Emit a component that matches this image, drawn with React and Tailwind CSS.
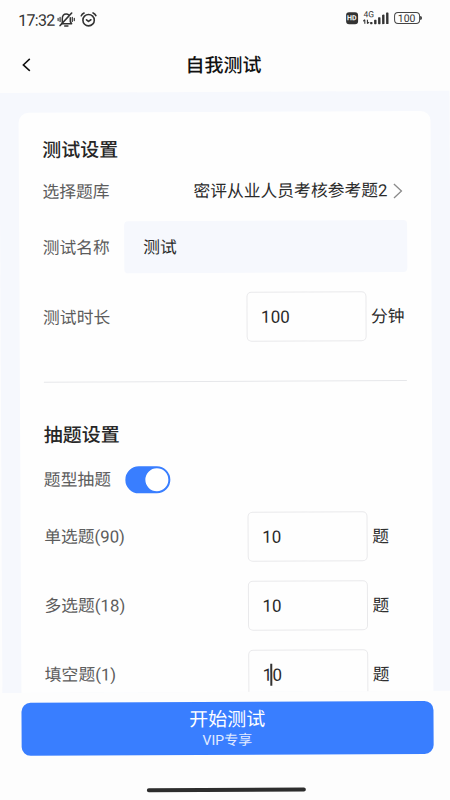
import { useState } from "react"

function StatusBar() {
  return (
    <div className="flex h-[40px] items-center pl-[19px] pr-[27px] text-[#333]">
      <span className="w-[36px] shrink-0 pt-[1px] text-[16px] tracking-[-0.7px]">17:32</span>
      <svg className="ml-[3px] shrink-0" width="18" height="16" viewBox="0 0 18 16" fill="none" stroke="currentColor" strokeWidth="1.5" strokeLinecap="round">
        <path d="M4.5 12h10M5.2 11.5V7.2C5.2 4.4 6.8 2.4 9.2 2.4c1 0 1.9.4 2.6 1M13.2 6v4l1.3 2M7.6 14.3h3.2" />
        <path d="M14.6 1.4L3 13.8" strokeWidth="1.7" />
        <path d="M1 6.7v2.2M3 5.6v4.2M15.2 5.6v4.2M17.2 6.7v2.2" strokeWidth="1.2" />
      </svg>
      <svg className="ml-[5px] shrink-0" width="17" height="16" viewBox="0 0 17 16" fill="none" stroke="currentColor" strokeWidth="1.6" strokeLinecap="round" strokeLinejoin="round">
        <circle cx="8.5" cy="8.6" r="5.7" />
        <path d="M6.4 8.2l2 1.7 2.4-1.7M1.2 4.1Q2 2.3 4 1.4M15.8 4.1Q15 2.3 13 1.4" />
      </svg>
      <div className="ml-auto flex items-center">
        <span className="flex h-[12px] w-[12.5px] items-center justify-center rounded-[3px] bg-[#333] pt-[1px] text-[7px] font-bold leading-none text-white">HD</span>
        <svg className="ml-[5px]" width="26" height="16" viewBox="0 0 26 16" fill="currentColor">
          <text x="0.5" y="7" fontSize="8.5" fontFamily="Roboto, sans-serif">4G</text>
          <path d="M1.7 9.5v4M4.3 9.5v4M0 11l1.7-1.5M4.3 13.5L6 12" stroke="currentColor" strokeWidth="1.1" fill="none" />
          <rect x="7" y="11.8" width="2.4" height="2.2" rx="0.6" />
          <rect x="11" y="9.5" width="2.4" height="4.5" rx="0.6" />
          <rect x="15" y="7" width="2.4" height="7" rx="0.6" />
          <rect x="19" y="4.5" width="2.4" height="9.5" rx="0.6" />
          <rect x="23" y="2.5" width="2.4" height="11.5" rx="0.6" />
        </svg>
        <span className="ml-[4.5px] flex h-[12.5px] w-[26px] items-center justify-center rounded-[4px] border-[1.5px] border-[#444] pt-[1.5px] text-[10.5px] leading-none">100</span>
        <span className="h-[4px] w-[2px] rounded-r-sm bg-[#444]" />
      </div>
    </div>
  )
}

function NumberField({ value, caret }) {
  return (
    <div className="relative flex h-[50px] w-[120px] shrink-0 items-center rounded-[5px] border border-[#e9e9eb] pl-[14px] pt-[2px] text-[17px] text-[#2b2b2b]">
      {value}
      {caret && <span className="absolute left-[21.5px] top-[13px] h-[22px] w-[1.5px] bg-[#333]" />}
    </div>
  )
}

function QuestionRow({ label, value, caret }) {
  return (
    <div className="flex h-[50px] items-center">
      <span className="w-[203px] pt-px text-[#5c5c5c]">{label}</span>
      <NumberField value={value} caret={caret} />
      <span className="ml-[5px] pt-[2px] text-[#2e2e2e]">题</span>
    </div>
  )
}

const questions = [
  { label: "单选题(90)", value: "10" },
  { label: "多选题(18)", value: "10" },
  { label: "填空题(1)", value: "10", caret: true },
]

export default function App() {
  const [typed, setTyped] = useState(true)

  return (
    <div className="h-[800px] w-[450px] overflow-hidden bg-[#fdfdfd] font-[Roboto,'Noto_Sans_CJK_SC',sans-serif]">
      <div className="-ml-[1px] flex h-[806px] w-[449.5px] origin-top-left rotate-[-0.28deg] flex-col">
        <StatusBar />
        <header className="grid h-[53px] shrink-0 grid-cols-[1fr_auto_1fr] items-center pb-[3px] pl-[22px] pr-[23px]">
          <svg width="10" height="14" viewBox="0 0 10 14" fill="none" stroke="#111" strokeWidth="1.5">
            <path d="M8.5 1L2 7l6.5 6" />
          </svg>
          <h1 className="pt-[2px] text-[19px] font-medium leading-none text-[#111]">自我测试</h1>
          <span />
        </header>

        <main className="h-[600px] shrink-0 overflow-hidden bg-[#f6f8fd] pl-[18.5px] pr-[18.5px] pt-[20px]">
          <section className="h-[620px] rounded-[10px] bg-[#fefefe] px-[24px] pt-[23px] text-[16.8px]">
            <h2 className="h-[30px] text-[19px] font-medium leading-[30px] text-[#262626]">测试设置</h2>

            <div className="mt-[12px] flex h-[30px] items-center justify-between">
              <span className="text-[#5c5c5c]">选择题库</span>
              <div className="flex items-center pr-[4.5px] text-[#2b2b2b]">
                <span>密评从业人员考核参考题2</span>
                <svg className="ml-[5px]" width="10" height="16" viewBox="0 0 10 16" fill="none" stroke="#8a8a8a" strokeWidth="1.3">
                  <path d="M1 1l7.5 7L1 15" />
                </svg>
              </div>
            </div>

            <div className="mt-[14px] flex h-[52px] items-center">
              <span className="w-[81.5px] shrink-0 pt-[2px] text-[#5c5c5c]">测试名称</span>
              <div className="flex h-[52px] w-[282.5px] items-center rounded-[4px] bg-[#f6f8fd] pl-[19px] pt-[2px] text-[#2b2b2b]">测试</div>
            </div>

            <div className="mt-[19px] flex h-[50px] items-center">
              <span className="w-[203px] shrink-0 pt-[2px] text-[#5c5c5c]">测试时长</span>
              <NumberField value="100" />
              <span className="ml-[5px] shrink-0 whitespace-nowrap pt-[2px] text-[#2b2b2b]">分钟</span>
            </div>

            <div className="mr-[1px] mt-[39px] h-px bg-[#e6e7ea]" />

            <h2 className="mt-[38px] h-[30px] text-[19px] font-medium leading-[30px] text-[#262626]">抽题设置</h2>

            <div className="mt-[15px] flex h-[28px] items-center">
              <span className="w-[81.5px] pt-[2px] text-[#5c5c5c]">题型抽题</span>
              <button
                onClick={() => setTyped(!typed)}
                className={`flex h-[27px] w-[45px] items-center rounded-full p-[2px] ${typed ? "justify-end bg-[#397eff]" : "justify-start bg-gray-300"}`}
              >
                <span className="size-[23px] rounded-full bg-white" />
              </button>
            </div>

            <div className="mt-[18.5px] flex flex-col gap-[19px]">
              {questions.map((q) => (
                <QuestionRow key={q.label} {...q} />
              ))}
            </div>
          </section>
        </main>

        <footer className="flex shrink-0 flex-col pl-[18.5px] pr-[18.5px] pt-[10px]">
          <button className="flex h-[53px] flex-col items-center justify-center rounded-[9px] bg-[#397eff] pt-[2px] text-white">
            <span className="text-[19px] leading-[22px]">开始测试</span>
            <span className="text-[14px] leading-[19px] text-[#e3ecff]">VIP专享</span>
          </button>
          <div className="ml-[125px] mt-[33px] h-[4px] w-[159px] rounded-full bg-[#2d2d2d]" />
        </footer>
      </div>
    </div>
  )
}
